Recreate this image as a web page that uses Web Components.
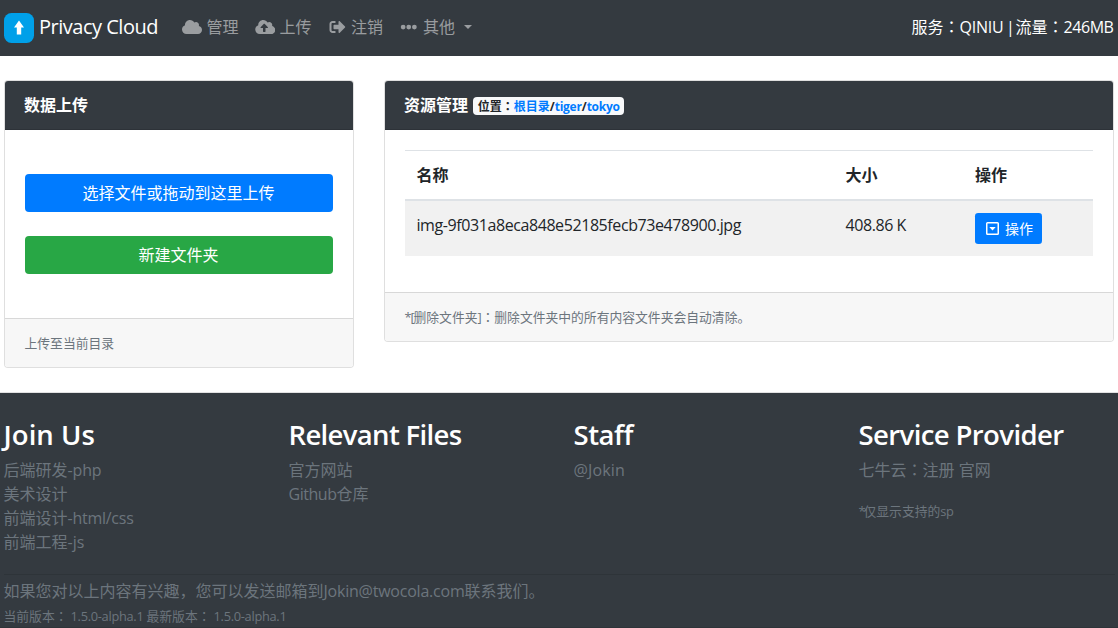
<!DOCTYPE html>
<html lang="zh-CN">
<head>
<meta charset="utf-8">
<title>Privacy Cloud</title>
<style>
html,body{margin:0;height:100%}
body{font:16px/24px "Open Sans","Noto Sans CJK SC",sans-serif;color:#212529;background:#fff;overflow:hidden}
</style>
</head>
<body>
<cloud-app></cloud-app>

<template id="app">
<style>
:host{display:flex;flex-direction:column;height:628px;overflow:hidden}
main{display:grid;grid-template-columns:350px 730px;gap:30px;align-items:start;padding:24px 4px;height:264px;margin-bottom:24px}
.stack{display:grid;gap:24px;padding:24px 0}
.table{display:grid;grid-template-columns:429px 129.5px 1fr;border-top:1px solid #dee2e6;margin-bottom:16px}
.table>*{padding:12px 12px 12px 11.5px}
.th{font-weight:600;border-bottom:2px solid #dee2e6;height:24px}
.td{background:#f1f1f1;height:31px}
.badge{display:inline-block;background:#f8f9fa;color:#212529;border-radius:4px;font-size:12px;line-height:12px;font-weight:700;padding:3px 4.5px;height:12px;vertical-align:0;margin-left:1px;white-space:nowrap}
.badge a{color:#007bff}
.c{font-family:"Noto Sans CJK TC";line-height:1}
</style>
<nav-bar>
  <nav-link icon="cloud">管理</nav-link>
  <nav-link icon="upload">上传</nav-link>
  <nav-link icon="signout">注销</nav-link>
  <nav-link icon="dots" caret>其他</nav-link>
  <span slot="end">服务<span class="c" lang="zh-TW">：</span><fit-text w="44">QINIU</fit-text><fit-text w="12"> | </fit-text>流量<span class="c" lang="zh-TW">：</span><fit-text w="50">246MB</fit-text></span>
</nav-bar>
<main>
  <panel-card>
    <span slot="header">数据上传</span>
    <div class="stack">
      <action-button block>选择文件或拖动到这里上传</action-button>
      <action-button block tone="success">新建文件夹</action-button>
    </div>
    <span slot="footer">上传至当前目录</span>
  </panel-card>
  <panel-card>
    <span slot="header">资源管理 <span class="badge">位置<span class="c" lang="zh-TW">：</span><a>根目录</a>/<a><fit-text w="27">tiger</fit-text></a>/<a><fit-text w="33">tokyo</fit-text></a></span></span>
    <div class="table">
      <div class="th">名称</div><div class="th">大小</div><div class="th">操作</div>
      <div class="td"><fit-text w="324.500">img-9f031a8eca848e52185fecb73e478900.jpg</fit-text></div>
      <div class="td"><fit-text w="60.500">408.86 K</fit-text></div>
      <div class="td"><action-button small><glyph-icon slot="icon" name="menu"></glyph-icon>操作</action-button></div>
    </div>
    <span slot="footer"><fit-text w="9">*[</fit-text>删除文件夹<fit-text w="4">]</fit-text><span class="c" lang="zh-TW">：</span>删除文件夹中的所有内容文件夹会自动清除。</span>
  </panel-card>
</main>
<site-footer>
  <link-list><fit-text slot="title" w="91.500">Join Us</fit-text>
    <div>后端研发<fit-text w="34">-php</fit-text></div><div>美术设计</div><div>前端设计<fit-text w="66">-html/css</fit-text></div><div>前端工程<fit-text w="17">-js</fit-text></div>
  </link-list>
  <link-list><fit-text slot="title" w="173">Relevant Files</fit-text>
    <div>官方网站</div><div><fit-text w="48">Github</fit-text>仓库</div>
  </link-list>
  <link-list><fit-text slot="title" w="59.5">Staff</fit-text>
    <div><fit-text w="51.500">@Jokin</fit-text></div>
  </link-list>
  <link-list><fit-text slot="title" w="205">Service Provider</fit-text>
    <div>七牛云<span class="c" lang="zh-TW">：</span>注册 官网</div>
    <small slot="note"><fit-text w="5">*</fit-text>仅显示支持的<fit-text w="13">sp</fit-text></small>
  </link-list>
  <span slot="contact">如果您对以上内容有兴趣，您可以发送邮箱到<fit-text w="141">Jokin@twocola.com</fit-text>联系我们。</span>
  <span slot="version">当前版本<span class="c" lang="zh-TW">：</span><fit-text w="79"> 1.5.0-alpha.1 </fit-text>最新版本<span class="c" lang="zh-TW">：</span><fit-text w="76"> 1.5.0-alpha.1</fit-text></span>
</site-footer>
</template>

<template id="nav">
<style>
:host{display:flex;align-items:center;box-sizing:border-box;height:56px;flex:none;background:#343a40;padding:0 4.5px 2px 4px;color:rgba(255,255,255,.5)}
.brand{display:flex;align-items:center;gap:5px;color:#fff;font-size:20px;line-height:30px;width:178px}
.brand svg{display:block;margin-top:2px}
.brand fit-text{margin-top:-1px}
.end{margin-left:auto;color:#fff;font-size:16px;white-space:nowrap}
</style>
<div class="brand">
<svg width="30" height="30" viewBox="0 0 30 30"><rect width="30" height="30" rx="7.5" fill="#00a0e9"/><path d="M15 7.5 20 14.5H17.2V21.5H12.8V14.5H10Z" fill="#fff"/></svg>
<fit-text w="119">Privacy Cloud</fit-text>
</div>
<slot></slot><div class="end"><slot name="end"></slot></div>
</template>

<template id="link">
<style>
:host{display:flex;align-items:center;margin-right:16px;white-space:nowrap}
glyph-icon{margin-right:4.5px}
i{display:none;border:4.8px solid transparent;border-top-color:currentColor;border-bottom:0;margin-left:9px;margin-top:-1px}
:host([caret]) i{display:block}
</style>
<glyph-icon></glyph-icon><span><slot></slot></span><i></i>
</template>

<template id="card">
<style>
:host{display:block;border:1px solid rgba(0,0,0,.125);border-radius:4px;overflow:hidden;background:#fff;background-clip:padding-box}
header{background:#343a40;color:#fff;font-weight:600;padding:12px 20px 12px 19px;height:24px;border-bottom:1px solid rgba(0,0,0,.125);white-space:nowrap}
section{padding:20px}
footer{padding:12px 20px 12px 19.5px;height:24px;border-top:1px solid rgba(0,0,0,.125);background:#f7f7f7;color:#6c757d;font-size:12.8px;line-height:25px}
</style>
<header><slot name="header"></slot></header><section><slot></slot></section><footer><slot name="footer"></slot></footer>
</template>

<template id="button">
<style>
:host{display:block}
button{box-sizing:border-box;display:flex;align-items:center;justify-content:center;width:100%;height:38px;border:0;border-radius:4px;background:#007bff;color:#fff;font:inherit;padding:0 12px 0 11px;white-space:nowrap}
:host([tone=success]) button{background:#28a745}
:host([small]) button{width:67px;height:31px;font-size:14px;border-radius:3.2px;gap:6px;padding:0 7px 0 9px}
</style>
<button><slot name="icon"></slot><span><slot></slot></span></button>
</template>

<template id="footer">
<style>
:host{display:block;flex:1;box-sizing:border-box;border-top:1px solid #e1e1e2;background:#343a40;color:#6c757d;padding:24px 3.5px 0;box-shadow:inset 0 -1px rgba(0,0,0,.1)}
.cols{display:grid;grid-template-columns:repeat(4,285px);height:157px}
hr{border:0;border-top:1px solid rgba(0,0,0,.1);margin:0 0 4px}
p{margin:0;white-space:nowrap}
.v{font-size:12.8px;margin-top:1px}
</style>
<div class="cols"><slot></slot></div><hr><p><slot name="contact"></slot></p><p class="v"><slot name="version"></slot></p>
</template>

<template id="list">
<style>
:host{display:block;white-space:nowrap}
h3{margin:0 0 6px;padding-top:1px;font-size:27.5px;line-height:33.6px;font-weight:600;color:#fff}
.note{margin-top:16px}
::slotted(small){font-size:12.8px}
</style>
<h3><slot name="title"></slot></h3><slot></slot><div class="note"><slot name="note"></slot></div>
</template>

<script>
const define = (name, id, setup) => customElements.define(name, class extends HTMLElement {
  constructor() {
    super();
    this.attachShadow({mode: 'open'}).append(document.getElementById(id).content.cloneNode(true));
  }
  connectedCallback() { if (setup) setup(this); }
});
define('cloud-app', 'app');
define('nav-bar', 'nav');
define('nav-link', 'link', el => el.shadowRoot.querySelector('glyph-icon').setAttribute('name', el.getAttribute('icon')));
define('panel-card', 'card');
define('action-button', 'button');
define('site-footer', 'footer');
define('link-list', 'list');

const cloud = 'M537.6 226.6c4.1-10.7 6.4-22.4 6.4-34.6 0-53-43-96-96-96-19.7 0-38.1 6-53.3 16.2C367 64.2 315.3 32 256 32c-88.4 0-160 71.6-160 160 0 2.7.1 5.4.2 8.1C40.2 219.8 0 273.2 0 336c0 79.5 64.5 144 144 144h368c70.7 0 128-57.3 128-128 0-61.9-44-113.6-102.4-125.4z';
const icons = {
  cloud: [20, 16, '0 0 640 512', `<path d="${cloud}"/>`],
  upload: [20.5, 16, '0 0 640 512', `<path fill-rule="evenodd" d="${cloud}M393.4 288H328v112c0 8.8-7.2 16-16 16h-48c-8.8 0-16-7.2-16-16V288h-65.4c-14.3 0-21.4-17.2-11.3-27.3l105.4-105.4c6.2-6.2 16.4-6.2 22.6 0l105.4 105.4c10.1 10.1 2.9 27.3-11.3 27.3z"/>`],
  signout: [19, 16, '0 0 512 512', '<path d="M497 273L329 441c-15 15-41 4.500-41-17v-96H152c-13.300 0-24-10.700-24-24v-96c0-13.300 10.700-24 24-24h136V88c0-21.400 25.900-32 41-17l168 168c9.300 9.400 9.300 24.600 0 34zM192 436v-40c0-6.600-5.400-12-12-12H96c-17.700 0-32-14.300-32-32V160c0-17.700 14.300-32 32-32h84c6.600 0 12-5.400 12-12V76c0-6.600-5.400-12-12-12H96c-53 0-96 43-96 96v192c0 53 43 96 96 96h84c6.600 0 12-5.400 12-12z"/>'],
  dots: [19.5, 16, '0 0 512 512', '<circle cx="76" cy="256" r="76"/><circle cx="256" cy="256" r="76"/><circle cx="436" cy="256" r="76"/>'],
  menu: [13, 13, '0 0 13 13', '<rect x=".75" y=".75" width="11.500" height="11.500" rx=".8" fill="none" stroke="currentColor" stroke-width="1.500"/><path d="M3.300 5H9.700L6.500 8.600Z"/>']
};
customElements.define('glyph-icon', class extends HTMLElement {
  connectedCallback() {
    if (!this.shadowRoot) this.attachShadow({mode: 'open'});
    this.draw();
  }
  static get observedAttributes() { return ['name']; }
  attributeChangedCallback() { if (this.shadowRoot) this.draw(); }
  draw() {
    const icon = icons[this.getAttribute('name')];
    if (!icon) return;
    this.shadowRoot.innerHTML = `<style>:host{display:block;flex:none}svg{display:block;fill:currentColor}</style><svg width="${icon[0]}" height="${icon[1]}" viewBox="${icon[2]}">${icon[3]}</svg>`;
  }
});

// Tracks its text so that the run takes the width given in "w".
customElements.define('fit-text', class extends HTMLElement {
  connectedCallback() {
    if (!this.shadowRoot) this.attachShadow({mode: 'open'}).innerHTML = '<style>:host{display:inline;white-space:pre}</style><slot></slot>';
    const width = this.getBoundingClientRect().width;
    this.style.letterSpacing = (this.getAttribute('w') - width) / this.textContent.length + 'px';
  }
});
</script>
</body>
</html>
